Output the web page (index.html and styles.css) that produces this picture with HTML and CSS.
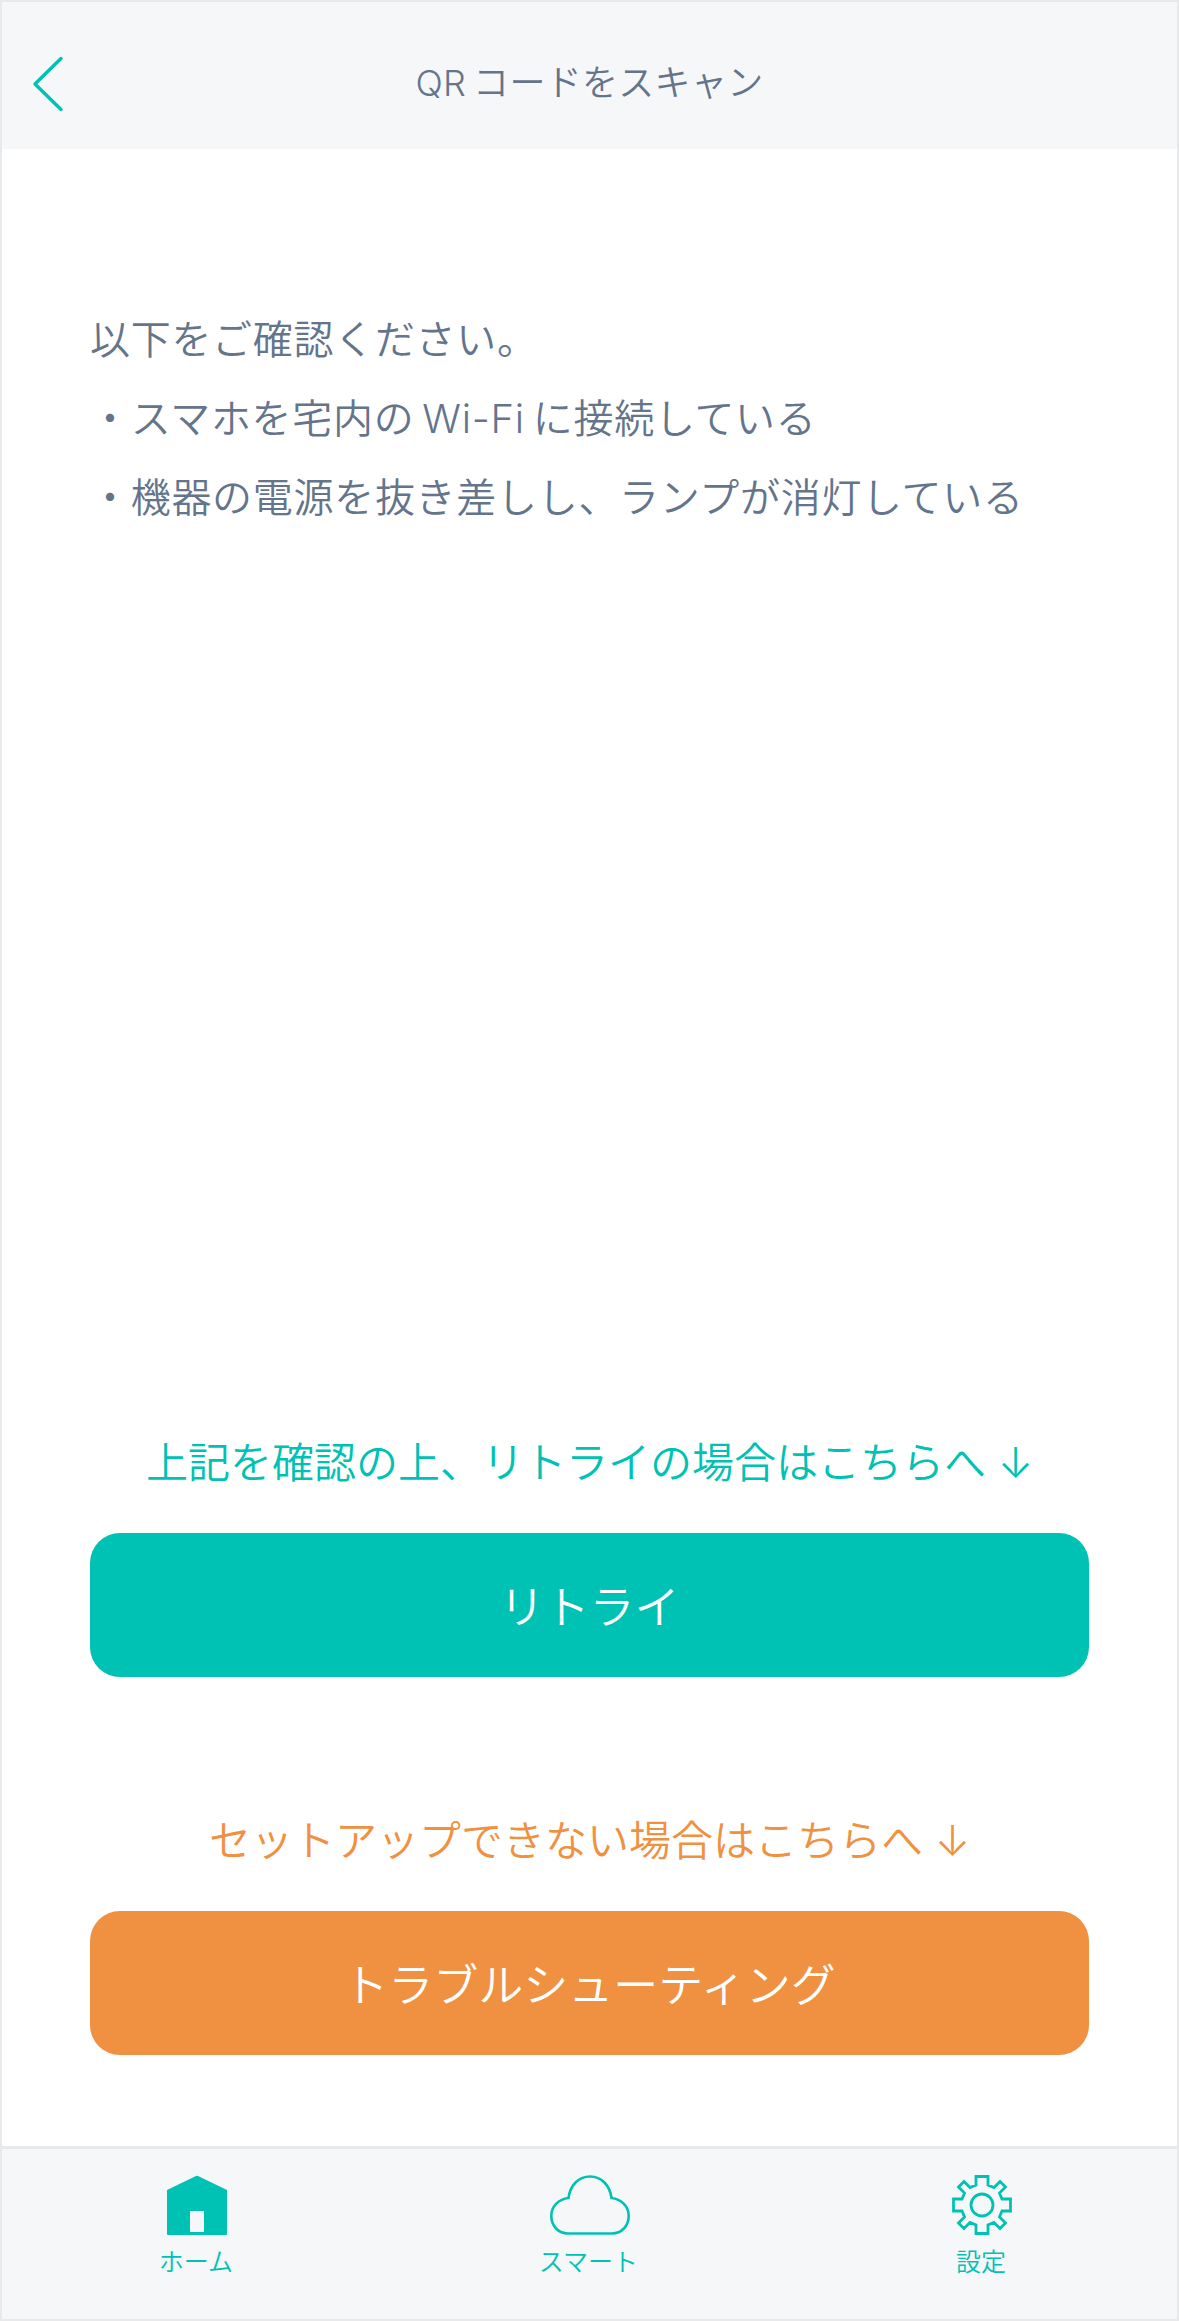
FILE: index.html
```html
<!DOCTYPE html>
<html lang="ja">
<head>
    <meta charset="UTF-8">
    <meta name="viewport" content="width=device-width, initial-scale=1.0">
    <title>QRコードをスキャン</title>
    <link rel="stylesheet" href="styles.css">
</head>
<body>
    <div class="screen">
        <header class="top-bar">
            <a class="back" href="#" aria-label="戻る">
                <svg width="32" height="56" viewBox="0 0 32 56">
                    <path d="M29 2.5 L3 28 L29 53.5" fill="none" stroke="#00c2b4" stroke-width="3.4" stroke-linecap="round" stroke-linejoin="round"/>
                </svg>
            </a>
            <h1>QR&#8201;コードをスキャン</h1>
        </header>

        <main class="content">
            <div class="notes">
                <p>以下をご確認ください。</p>
                <p>・スマホを宅内の&#8201;Wi-Fi&#8201;に接続している</p>
                <p>・機器の電源を抜き差しし、ランプが消灯している</p>
            </div>

            <div class="actions">
                <p class="hint hint-green">上記を確認の上、リトライの場合はこちらへ ↓</p>
                <a class="btn btn-green" href="#">リトライ</a>
                <p class="hint hint-orange">セットアップできない場合はこちらへ ↓</p>
                <a class="btn btn-orange" href="#">トラブルシューティング</a>
            </div>
        </main>

        <nav class="tab-bar">
            <a class="tab" href="#">
                <svg width="60" height="60" viewBox="0 0 60 60">
                    <path fill-rule="evenodd" fill="#00c2b4" d="M0 15 L29 1 Q30 .5 31 1 L60 15 V59 Q60 60 59 60 H1 Q0 60 0 59 Z M23 36 V57 H37 V36 Z"/>
                </svg>
                <span>ホーム</span>
            </a>
            <a class="tab" href="#">
                <svg width="80" height="60" viewBox="0 0 80 60">
                    <path fill="none" stroke="#00c2b4" stroke-width="2.6" d="M18 58.5 H62 C71.5 58.5 78.7 51 78.7 41 C78.7 31 71 24 61.5 23 C60 11 52 1.5 40 1.5 C28 1.5 20 11 18.5 23 C9 24 1.3 31 1.3 41 C1.3 51 8.5 58.5 18 58.5 Z"/>
                </svg>
                <span>スマート</span>
            </a>
            <a class="tab" href="#">
                <svg width="60" height="60" viewBox="0 0 60 60">
                    <g fill="none" stroke="#00c2b4" stroke-width="2.8" stroke-linejoin="miter">
                        <path d="M24 1.5 H36 V10 L42 12.5 L48 6.5 L53.5 12 L47.5 18 L50 24 H58.5 V36 H50 L47.5 42 L53.5 48 L48 53.5 L42 47.5 L36 50 V58.5 H24 V50 L18 47.5 L12 53.5 L6.5 48 L12.5 42 L10 36 H1.5 V24 H10 L12.5 18 L6.5 12 L12 6.5 L18 12.5 L24 10 Z"/>
                        <circle cx="30" cy="30" r="11"/>
                    </g>
                </svg>
                <span>設定</span>
            </a>
        </nav>
    </div>
</body>
</html>
```

FILE: styles.css
```css
* {
    box-sizing: border-box;
}
html, body {
    margin: 0;
    padding: 0;
}
body {
    background-color: #fff;
    font-family: Inter, "Noto Sans CJK JP", sans-serif;
    font-weight: 350;
}
a {
    text-decoration: none;
}
p, h1 {
    margin: 0;
    font-weight: inherit;
}
.screen {
    display: flex;
    flex-direction: column;
    width: 1179px;
    height: 2321px;
    border: 2px solid #e8e9eb;
}
.top-bar {
    display: flex;
    align-items: center;
    justify-content: center;
    position: relative;
    flex: none;
    height: 147px;
    background-color: #f6f7f9;
}
.top-bar h1 {
    font-size: 36px;
    letter-spacing: 0.3px;
    line-height: 50px;
    padding-top: 14px;
    color: #64748b;
}
.back {
    position: absolute;
    left: 30px;
    top: 54px;
    display: block;
    height: 56px;
}
.content {
    display: flex;
    flex-direction: column;
    justify-content: space-between;
    flex: 1;
    padding: 151px 88px 91px;
}
.notes {
    font-size: 40px;
    letter-spacing: 0.7px;
    line-height: 79px;
    color: #64748b;
}
.actions {
    display: flex;
    flex-direction: column;
}
.hint {
    font-size: 42px;
    line-height: 60px;
    text-align: center;
    padding-top: 3px;
    margin-bottom: 40px;
}
.hint-green {
    color: #00c2b4;
}
.hint-orange {
    color: #f09142;
    margin-top: 131px;
}
.btn {
    display: flex;
    align-items: center;
    justify-content: center;
    height: 144px;
    padding-bottom: 2px;
    border-radius: 30px;
    font-size: 45px;
    color: #fff;
}
.btn-green {
    background-color: #00c2b4;
}
.btn-orange {
    background-color: #f09142;
}
.tab-bar {
    display: grid;
    grid-template-columns: 390px 1fr 390px;
    flex: none;
    height: 173px;
    padding-top: 26px;
    background-color: #f6f7f9;
    border-top: 3px solid #e8e9eb;
}
.tab {
    display: flex;
    flex-direction: column;
    align-items: center;
    color: #00c2b4;
    font-size: 25px;
    line-height: 36px;
}
.tab svg {
    display: block;
    margin-bottom: 9px;
}
.tab span {
    padding-right: 2px;
}
```
